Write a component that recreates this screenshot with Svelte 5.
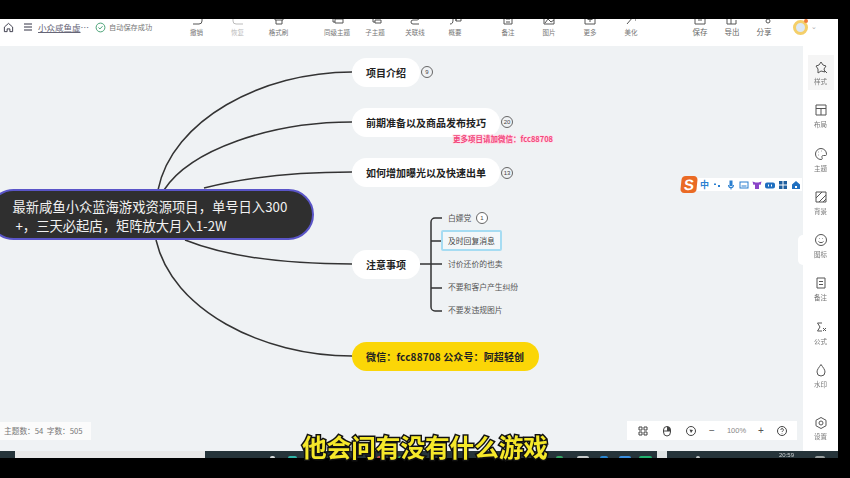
<script lang="ts">
  // toolbar icons are cut off by the letterbox band, only their lower half shows
  const leftTools = [
    { label: '撤销', d: 'M3 13h6a3 3 0 0 0 3-3V5' },
    { label: '恢复', d: 'M12 13H5a3 3 0 0 1-3-3V5', faint: true },
    { label: '格式刷', d: 'M3 5v4h8V5M4 9v4h6V9' },
  ];
  const midTools = [
    { label: '同级主题', d: 'M3 4v7h2M5 8h8v4H5z' },
    { label: '子主题', d: 'M2 4h3v7h2M7 9h6v3H7z' },
    { label: '关联线', d: 'M11 4v3a2 2 0 0 1-2 2H5a2 2 0 0 0 0 4h6' },
    { label: '概要', d: 'M3 4c2 0 2 2 2 5s-1 4-3 4M8 4v6M8 5h5v5H8z' },
  ];
  const insertTools = [
    { label: '备注', d: 'M3 3v10h8V3M5 8h4M5 11h4' },
    { label: '图片', d: 'M2 3v10h10V3M3 12l3-4 3 3 3-2M9 6h1' },
    { label: '更多', d: 'M2 3v10h10V3M7 6v5M4.500 8.500h5' },
    { label: '美化', d: 'M3 13l6-7M9 4l2 2M11 9h1M12 5h1' },
  ];
  const fileTools = [
    { label: '保存', d: 'M2 3v10h10V3M5 9h4' },
    { label: '导出', d: 'M2 3v10h9V9M6 3v10M8 7h5' },
    { label: '分享', d: 'M4 3l7 5M9 10a2 2 0 1 0 4 0a2 2 0 1 0-4 0' },
  ];
  const sideTools = [
    { label: '样式', d: 'M7 2l2 3 3 1-2 3 1 3-4-1-3 2V9L2 6l3-1zM10 10l3 3' },
    { label: '布局', d: 'M2 2h10v10H2zM2 5.500h10M7 5.500V12' },
    { label: '主题', d: 'M7 1.500a5.500 5.500 0 1 0 0 11c1.500 0 1.500-1 1-2s0-2 1.500-2h2c1 0 1-1 1-1.500 0-3-2.500-5.500-5.500-5.500zM4.500 5h.5M4 8h.5M7 4h.5' },
    { label: '背景', d: 'M2 2h10v10H2zM2 8l6-6M5 12l7-7M9 12l3-3' },
    { label: '图标', d: 'M1.500 7a5.500 5.500 0 1 0 11 0a5.500 5.500 0 1 0-11 0M5 5.500h.5M8.500 5.500h.5M4.500 8.500c1 1.500 4 1.500 5 0' },
    { label: '备注', d: 'M3 2h8v10H3zM5 5.500h4M5 8.500h4' },
    { label: '公式', d: 'M8 3H3.500l2.500 4-2.500 4H8M9 8l3 3M12 8l-3 3' },
    { label: '水印', d: 'M7 1.500c-2 3-4 5-4 7.500a4 4 0 0 0 8 0c0-2.500-2-4.500-4-7.500z' },
  ];
  const children = ['白嫖党', '及时回复消息', '讨价还价的也卖', '不要和客户产生纠纷', '不要发违规图片'];
  // the input method bar, solid little glyphs
  const imeIcons = [
    { color: '#2a7fd0', d: 'M1 3.500h2v1.500H1zM5 5h2v2H5z' },
    { color: '#2a7fd0', d: 'M3.500 0.500h3v5.500h-3zM2 5h1c0 2.500 4 2.500 4 0h1c0 2-1 3-2.500 3.200V9.500h-1V8.200C3 8 2 7 2 5z' },
    { color: '#2a7fd0', d: 'M0.500 1.500h9v7h-9zM1.500 2.500v5h7v-5zM2.500 5.500h5v1h-5z' },
    { color: '#8a44c8', d: 'M0.500 1.500l3 1h3l3-1-1 3.500-1.500-.5v4.500h-4V4.500L1.500 5z' },
    { color: '#1f6fc0', d: 'M2 2.500h6a2 2 0 0 1 2 2v2a2 2 0 0 1-2 2H2a2 2 0 0 1-2-2v-2a2 2 0 0 1 2-2zM3 4.500v2h1v-2zM6 4.500v2h1v-2z' },
    { color: '#1f5f9f', d: 'M1 1h3.500v3.500H1zM5.500 1H9v3.500H5.500zM1 5.500h3.500V9H1zM5.500 5.500H9V9H5.500z' },
    { color: '#1f6fc0', d: 'M5 1l4 3.500v4.500H1V4.500zM4 6v2h2V6z' },
  ];
  // bits of taskbar icons that stick out above the black band
  const trayBits = [
    { x: 270, w: 5, c: '#d8dcdc' },
    { x: 288, w: 9, c: '#2fb5a8' },
    { x: 377, w: 6, c: '#c9524a' },
    { x: 398, w: 6, c: '#3fa56a' },
    { x: 556, w: 7, c: '#35a564' },
    { x: 577, w: 12, c: '#c8cccc' },
    { x: 600, w: 8, c: '#2a86d0' },
    { x: 619, w: 12, c: '#3a8fe0' },
    { x: 639, w: 13, c: '#22b36f' },
    { x: 696, w: 4, c: '#c8cccc' },
    { x: 815, w: 10, c: '#9aa0a0' },
  ];
</script>

<div class="screen">
  <div class="app">
    <header class="toolbar">
      <div class="doc">
        <svg class="home" viewBox="0 0 12 12"><path d="M1.500 5.500L6 1.500l4.500 4v5h-3V7.500h-3v3h-3z" /></svg>
        <svg class="menu" viewBox="0 0 10 10"><path d="M1 2h8M1 5h8M1 8h8" /></svg>
        <span class="title"><u>小众咸鱼虚</u>…</span>
        <svg class="saved" viewBox="0 0 12 12"><circle cx="6" cy="6" r="4.800" /><path d="M3.800 6l1.600 1.600 2.800-3" /></svg>
        <span class="saved-text">自动保存成功</span>
      </div>

      <div class="group first">
        {#each leftTools as t}
          <div class="tool" class:faint={t.faint}>
            <svg viewBox="0 0 14 14"><path d={t.d} /></svg>
            <span>{t.label}</span>
          </div>
        {/each}
      </div>
      <div class="group mid">
        {#each midTools as t}
          <div class="tool">
            <svg viewBox="0 0 14 14"><path d={t.d} /></svg>
            <span>{t.label}</span>
          </div>
        {/each}
      </div>
      <div class="group insert">
        {#each insertTools as t}
          <div class="tool">
            <svg viewBox="0 0 14 14"><path d={t.d} /></svg>
            <span>{t.label}</span>
          </div>
        {/each}
      </div>
      <div class="group files">
        {#each fileTools as t}
          <div class="tool big">
            <svg viewBox="0 0 14 14"><path d={t.d} /></svg>
            <span>{t.label}</span>
          </div>
        {/each}
      </div>
      <div class="avatar"><i></i></div>
      <span class="caret">⌄</span>
    </header>

    <div class="body">
      <main class="canvas">
        <svg class="links" viewBox="0 0 803 405">
          <g transform="translate(0 -46)">
            <path d="M158 190C172 120 262 72 352 72" />
            <path d="M164 190C190 150 270 122 352 122" />
            <path d="M204 188C250 176 300 172 352 172" />
            <path d="M185 240C230 258 290 264 352 264" />
            <path d="M156 240C172 310 262 356 352 356" />
            <path d="M420 264H442M442 218H435a4 4 0 0 0-4 4V307a4 4 0 0 0 4 4H442M431 241H442M431 288H442" />
          </g>
        </svg>

        <div class="root">最新咸鱼小众蓝海游戏资源项目，单号日入300<br />&nbsp;+，三天必起店，矩阵放大月入1-2W</div>

        <div class="node n1">项目介绍</div>
        <span class="count c1">9</span>
        <div class="node n2">前期准备以及商品发布技巧</div>
        <span class="count c2">20</span>
        <div class="node n3">如何增加曝光以及快速出单</div>
        <span class="count c3">13</span>
        <div class="node n4">注意事项</div>
        <div class="node n5">微信：fcc88708 公众号：阿超轻创</div>

        <div class="leaves">
          {#each children as c, i}
            <div class="leaf" class:selected={i === 1}>
              {c}
              {#if i === 0}<span class="count inline">1</span>{/if}
            </div>
          {/each}
        </div>

        <div class="mark">更多项目请加微信：fcc88708</div>

        <div class="ime">
          <span class="ime-logo">S</span>
          <div class="ime-bar">
            <span class="zh">中</span>
            {#each imeIcons as icon}
              <svg viewBox="0 0 10 10" style="color:{icon.color}"><path class="solid" d={icon.d} /></svg>
            {/each}
          </div>
        </div>

        <div class="count-box">主题数：54&nbsp;&nbsp;字数：505</div>

        <div class="zoom-box">
          <svg viewBox="0 0 12 12"><path d="M2 2h3v3H2zM7 2h3v3H7zM2 7h3v3H2zM7 7h3v3H7z" /></svg>
          <svg viewBox="0 0 12 12"><path d="M2.500 7a3.500 4 0 0 0 7 0V5a3.500 3.500 0 0 0-7 0zM2.500 6h7" /><path class="solid" d="M6 1.500a3.500 3.500 0 0 1 3.500 3.500v1H6z" /></svg>
          <svg viewBox="0 0 12 12"><circle cx="6" cy="6" r="4.500" /><path class="solid" d="M4.500 4.500L8 5 6 8z" /></svg>
          <span class="op">−</span>
          <span class="pct">100%</span>
          <span class="op">+</span>
          <svg viewBox="0 0 12 12"><circle cx="6" cy="6" r="4.500" /><path d="M4.800 4.800a1.300 1.300 0 1 1 1.800 1.300L6 6.800M6 8.300v.5" /></svg>
        </div>

        <div class="handle"></div>
      </main>

      <aside class="sidebar">
        {#each sideTools as t, i}
          <div class="side-item" class:active={i === 0}>
            <svg viewBox="0 0 14 14"><path d={t.d} /></svg>
            <span>{t.label}</span>
          </div>
        {/each}
        <div class="side-item settings">
          <svg viewBox="0 0 14 14"><path d="M7 1.500l5 2.750v5.500L7 12.500 2 9.750v-5.500z" /><circle cx="7" cy="7" r="2" /></svg>
          <span>设置</span>
        </div>
      </aside>
    </div>

    <footer class="taskbar">
      <div class="search"></div>
      <div class="tasks"></div>
      <div class="tray"></div>
      {#each trayBits as bit}
        <i class="bit" style="left:{bit.x}px;width:{bit.w}px;background:{bit.c}"></i>
      {/each}
      <div class="clock">20:59</div>
    </footer>
  </div>

  <div class="subtitle">他会问有没有什么游戏</div>
</div>

<style>
  :global(body) {
    margin: 0;
    background: #000;
  }

  .screen {
    position: relative;
    width: 850px;
    height: 478px;
    overflow: hidden;
    padding: 19px 12px 20px 0;
    box-sizing: border-box;
    background: #000;
    font-family: 'Noto Sans CJK SC', 'Liberation Sans', sans-serif;
  }

  .app {
    height: 100%;
    display: flex;
    flex-direction: column;
    overflow: hidden;
    filter: blur(0.45px);
  }

  svg path,
  svg circle {
    fill: none;
    stroke: currentColor;
    stroke-width: 1;
  }

  svg path.solid {
    fill: currentColor;
    stroke: none;
    fill-rule: evenodd;
  }

  /* top bar */
  .toolbar {
    height: 27px;
    flex-shrink: 0;
    display: flex;
    background: #fff;
    overflow: hidden;
    color: #666;
  }

  .doc {
    width: 176px;
    flex-shrink: 0;
    display: flex;
    align-items: center;
    height: 16px;
    padding: 0 0 0 3px;
    box-sizing: border-box;
  }

  .home {
    width: 11px;
    height: 11px;
    color: #334;
  }

  .menu {
    width: 10px;
    height: 10px;
    margin-left: 9px;
    color: #334;
  }

  .title {
    font-size: 8.500px;
    color: #667;
    margin-left: 5px;
    white-space: nowrap;
    width: 52px;
    flex-shrink: 0;
  }

  .saved {
    width: 11px;
    height: 11px;
    color: #3a9a6a;
    margin-left: 5px;
    flex-shrink: 0;
  }

  .saved-text {
    font-size: 7.200px;
    color: #777;
    margin-left: 3px;
    white-space: nowrap;
  }

  .group {
    display: flex;
    flex-shrink: 0;
  }

  .first {
    width: 143px;
  }

  .mid {
    width: 156px;
  }

  .mid .tool {
    width: 40px;
  }

  .mid .tool:first-child {
    width: 36px;
  }

  .insert {
    width: 164px;
    margin-left: 12.500px;
  }

  .files {
    margin-left: 32.500px;
  }

  .tool {
    width: 41px;
    display: flex;
    flex-direction: column;
    align-items: center;
    height: 38px;
    margin-top: -15px;
    flex-shrink: 0;
    color: #555;
  }

  .tool svg {
    width: 14px;
    height: 14px;
    margin-top: 7px;
  }

  .tool span {
    font-size: 6.500px;
    line-height: 10px;
    margin-top: 2px;
    color: #777;
    white-space: nowrap;
  }

  .tool.faint,
  .tool.faint span {
    color: #bbb;
  }

  .tool.big {
    width: 32px;
  }

  .tool.big span {
    font-size: 7.500px;
    color: #666;
  }

  .avatar {
    width: 15px;
    height: 15px;
    margin: 1px 0 0 12.500px;
    box-sizing: border-box;
    border: 3px solid #f4cf6a;
    border-radius: 50%;
    background: #dce8f6;
    position: relative;
    flex-shrink: 0;
  }

  .avatar i {
    position: absolute;
    top: -4px;
    right: -3px;
    width: 4px;
    height: 4px;
    border-radius: 50%;
    background: #ef7a3a;
  }

  .caret {
    font-size: 7px;
    color: #aaa;
    margin: 0 0 0 3px;
    line-height: 14px;
  }

  /* canvas */
  .body {
    flex: 1;
    min-height: 0;
    display: flex;
  }

  .canvas {
    position: relative;
    flex: 1;
    background: #eff2f4;
    overflow: hidden;
  }

  .links {
    position: absolute;
    inset: 0;
    width: 803px;
    height: 405px;
  }

  .links path {
    stroke: #333;
    stroke-width: 1.500;
  }

  .root {
    position: absolute;
    left: -12px;
    top: 143px;
    width: 326px;
    height: 51px;
    box-sizing: border-box;
    padding: 5.500px 0 0 22.500px;
    border: 2px solid #5a55c8;
    border-radius: 26px;
    background: #2f2f2f;
    color: #f2f2f2;
    font-size: 13.300px;
    line-height: 19.500px;
    white-space: nowrap;
  }

  .node {
    position: absolute;
    left: 352px;
    height: 29px;
    line-height: 29px;
    padding: 0 14px;
    border-radius: 15px;
    background: #fff;
    color: #222;
    font-size: 10px;
    font-weight: 700;
    white-space: nowrap;
  }

  .n1 {
    top: 12px;
  }

  .n2 {
    top: 62px;
  }

  .n3 {
    top: 112px;
  }

  .n4 {
    top: 204px;
  }

  .n5 {
    top: 296px;
    background: #fbd607;
    letter-spacing: 0.130px;
    padding-right: 15px;
  }

  .count {
    position: absolute;
    width: 12px;
    height: 12px;
    box-sizing: border-box;
    border: 1px solid #666;
    border-radius: 50%;
    font-size: 6px;
    line-height: 10px;
    text-align: center;
    color: #444;
    font-family: 'Liberation Sans', sans-serif;
  }

  .c1 {
    left: 421px;
    top: 20px;
  }

  .c2 {
    left: 501px;
    top: 70px;
  }

  .c3 {
    left: 501px;
    top: 121px;
  }

  .count.inline {
    left: 34px;
    top: 4px;
    background: #fff;
  }

  .leaves {
    position: absolute;
    left: 441px;
    top: 160.500px;
    display: flex;
    flex-direction: column;
    align-items: flex-start;
    gap: 2.200px;
  }

  .leaf {
    position: relative;
    height: 21px;
    line-height: 19px;
    padding: 0 6px;
    font-size: 7.800px;
    color: #555;
    white-space: nowrap;
    border: 1px solid transparent;
    box-sizing: border-box;
  }

  .leaf.selected {
    width: 61px;
    border: 2px solid #a6dcf2;
    border-radius: 2px;
    padding: 0 5px;
    line-height: 17px;
    color: #444;
    background: #f3f7f9;
  }

  .mark {
    position: absolute;
    left: 453px;
    top: 87px;
    font-size: 7.500px;
    line-height: 11px;
    font-weight: 700;
    color: #f2477c;
    -webkit-text-stroke: 1.500px #ffe0ea;
    paint-order: stroke fill;
    white-space: nowrap;
  }

  .ime {
    position: absolute;
    left: 681px;
    top: 130px;
    display: flex;
    align-items: center;
  }

  .ime-logo {
    width: 16px;
    height: 17px;
    border-radius: 4px;
    background: #ea6a24;
    color: #fff;
    font: 700 15px/17px 'Liberation Sans', sans-serif;
    text-align: center;
    flex-shrink: 0;
    transform: skewX(-6deg);
    position: relative;
  }

  .ime-bar {
    width: 105px;
    height: 13px;
    display: flex;
    align-items: center;
    gap: 3px;
    padding: 0 0 0 3px;
    box-sizing: border-box;
    background: #fff;
  }

  .zh {
    font-size: 9px;
    color: #2a7fd0;
    line-height: 13px;
    font-weight: 700;
    margin-right: 1px;
  }

  .ime-bar svg {
    width: 10px;
    height: 10px;
    flex-shrink: 0;
  }

  .count-box {
    position: absolute;
    left: 0;
    top: 376px;
    width: 91px;
    height: 18px;
    line-height: 18px;
    padding-left: 4px;
    box-sizing: border-box;
    background: #fbfbfb;
    color: #777;
    font-size: 7.700px;
    white-space: nowrap;
  }

  .zoom-box {
    position: absolute;
    left: 627px;
    top: 375px;
    width: 170px;
    height: 19px;
    padding: 0 9px 0 10px;
    box-sizing: border-box;
    display: flex;
    align-items: center;
    justify-content: space-between;
    background: #fff;
    color: #444;
  }

  .zoom-box svg {
    width: 12px;
    height: 12px;
  }

  .op {
    font-size: 10px;
    line-height: 12px;
    color: #555;
    font-family: 'Liberation Sans', sans-serif;
  }

  .pct {
    font-size: 7.500px;
    color: #888;
    font-family: 'Liberation Sans', sans-serif;
  }

  .handle {
    position: absolute;
    right: 0;
    top: 189px;
    width: 5px;
    height: 30px;
    border-radius: 5px 0 0 5px;
    background: #fff;
  }

  /* right rail */
  .sidebar {
    width: 35px;
    flex-shrink: 0;
    display: flex;
    flex-direction: column;
    align-items: center;
    gap: 8.300px;
    padding: 9px 0 0;
    box-sizing: border-box;
    background: #fff;
  }

  .side-item {
    width: 26px;
    height: 35px;
    display: flex;
    flex-direction: column;
    align-items: center;
    padding-top: 5px;
    box-sizing: border-box;
    color: #555;
    flex-shrink: 0;
  }

  .side-item.active {
    background: #f5f5f5;
  }

  .side-item svg {
    width: 14px;
    height: 14px;
  }

  .side-item span {
    font-size: 6.500px;
    line-height: 10px;
    margin-top: 2px;
    color: #777;
  }

  .settings {
    margin-top: 10px;
  }

  .settings span {
    margin-top: 1px;
  }

  /* cut-off windows taskbar */
  .taskbar {
    position: relative;
    height: 7px;
    flex-shrink: 0;
    display: flex;
    background: #26343a;
  }

  .search {
    width: 190px;
    margin-left: 15px;
    background: #e8e8e8;
  }

  .tasks {
    width: 452px;
  }

  .tray {
    width: 10px;
    background: #dfe3e4;
  }

  .bit {
    position: absolute;
    top: 5px;
    height: 3px;
    border-radius: 2px 2px 0 0;
  }

  .clock {
    position: absolute;
    left: 779px;
    top: 1px;
    font: 6px/6px 'Liberation Sans', sans-serif;
    color: #cfd3d5;
  }

  .subtitle {
    position: absolute;
    left: 0;
    right: 0;
    top: 431px;
    text-align: center;
    font-size: 24.600px;
    line-height: 30px;
    font-weight: 700;
    color: #f5e82a;
    -webkit-text-stroke: 3px #111;
    paint-order: stroke fill;
    white-space: nowrap;
  }
</style>
